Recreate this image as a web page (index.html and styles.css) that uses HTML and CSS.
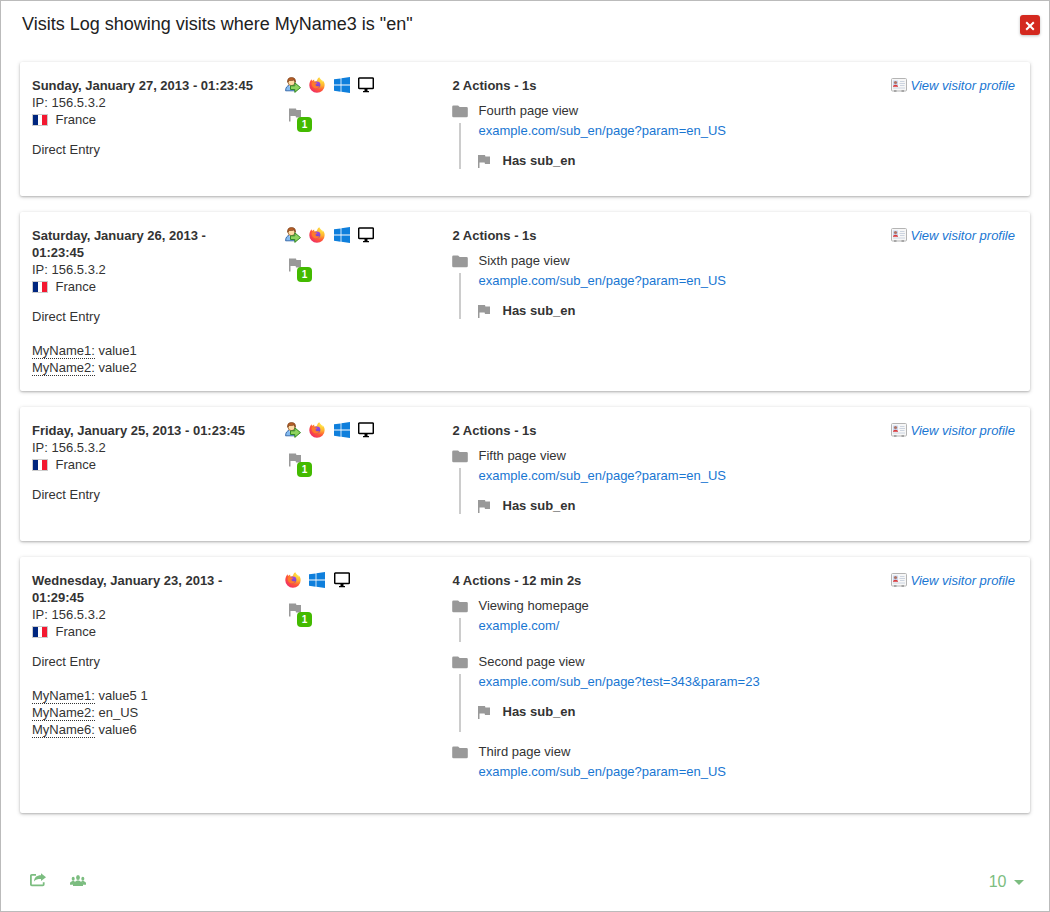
FILE: index.html
```html
<!DOCTYPE html>
<html lang="en">
<head>
<meta charset="utf-8">
<title>Visits Log</title>
<link rel="stylesheet" href="styles.css">
</head>
<body>
<svg class="sprite" aria-hidden="true">
  <defs>
    <radialGradient id="flame" cx=".85" cy=".1" r="1.050">
      <stop offset="0" stop-color="#fff04a"/><stop offset=".4" stop-color="#ffb52e"/><stop offset=".68" stop-color="#ff5a36"/><stop offset="1" stop-color="#ee2a6a"/>
    </radialGradient>
    <linearGradient id="globe" x1="0" y1="0" x2="0" y2="1">
      <stop offset="0" stop-color="#a04be0"/><stop offset="1" stop-color="#7040c8"/>
    </linearGradient>
  </defs>
  <symbol id="returning" viewBox="0 0 16 16">
    <path d="M.6 13.800c0-3.200 1.400-5.200 4-5.500h3c2 .2 3.200 1.600 3.400 5.500z" fill="#86bcf0" stroke="#2f62a5" stroke-width=".9"/>
    <path d="M3.800 8.300 6 11.600l2-3.300z" fill="#fff"/>
    <ellipse cx="6.500" cy="5" rx="3.500" ry="3.700" fill="#ffdba6" stroke="#8a4b15" stroke-width=".7"/>
    <path d="M2.600 5.300C2.300 1.800 3.800.600 6.500.600s4.400 1.200 3.900 4.700C10 4.300 9.500 3.500 9 2.900 7.500 3.700 5 3.500 4.100 3.400z" fill="#b8602a" stroke="#6b3510" stroke-width=".6"/>
    <path d="M5.500 8.800h4.300V5.800L15.500 10.600l-5.700 4.800v-2.900H5.500z" fill="#8fd45e" stroke="#28801a" stroke-width=".9"/>
  </symbol>
  <symbol id="firefox" viewBox="0 0 16 16">
    <path d="M15.400 6.200c-.4-1.500-1.500-2.600-2.200-3.100.4.700.6 1.300.7 1.900C12.800 2.700 11 2 10.300.3 8.600 1.400 8.100 2.800 8 3.800c-.8 0-1.500.3-2.100.6-.8-.5-.8-1.300-.7-2-1 .5-1.700 1.200-2.100 1.700-.4-.4-.4-1.200-.3-1.800C1.300 3.500.3 5.900.3 8.300a7.650 7.500 0 0 0 15.300.1c0-.8 0-1.500-.2-2.200z" fill="url(#flame)"/>
    <circle cx="8" cy="7.800" r="3.400" fill="url(#globe)"/>
    <path d="M2.900 5.200c1.300-.5 2.500-.3 3.300.4 1 .2 1.600.1 1.800.4.100.8-1 1-1.500 1.400-.3 1.300 1.800 2.500 4.200 1.600-.6 1.800-2.600 2.800-4.600 2.200C3.400 10.500 2 7.500 2.900 5.200z" fill="#ff7a2c"/>
  </symbol>
  <symbol id="windows" viewBox="0 0 16 16">
    <path d="M0 2.300 6.600 1.400V7.600H0zM7.400 1.300 16 .1V7.600H7.400zM0 8.400h6.600v6.300L0 13.800zM7.400 8.400H16v7.500l-8.600-1.200z" fill="#0f7fdc"/>
  </symbol>
  <symbol id="desktop" viewBox="0 0 16 16">
    <path d="M1.400 1h13.200q.7 0 .7.700v9q0 .7-.7.700H1.400q-.7 0-.7-.7v-9q0-.7.7-.7z" fill="none" stroke="#000" stroke-width="1.500"/>
    <path d="M6.500 12h3v2H11v1.300H5V14h1.500z" fill="#000"/>
  </symbol>
  <symbol id="flag" viewBox="0 0 14 14">
    <path d="M1 1h7l.4 1.500H13V10H8l-.4-1.600H2.500V14H1z" fill="#999"/>
  </symbol>
  <symbol id="folder" viewBox="0 0 16 13">
    <path d="M1.500.500h4.600L7.700 2h6.800q1.300 0 1.300 1.300v7.600q0 1.300-1.300 1.300h-13Q.2 12.200.2 10.900V1.800Q.2.500 1.500.500z" fill="#999"/>
  </symbol>
  <symbol id="profile" viewBox="0 0 16 14">
    <rect x=".5" y=".5" width="15" height="12.500" rx="1" fill="#f7f7f7" stroke="#b4b4b4"/>
    <path d="M2 2.500h5v6H2z" fill="#c8d8f2"/>
    <circle cx="4.500" cy="4.500" r="1.600" fill="#b07565"/>
    <path d="M2 8.800V8q2.500-2.600 5 0v.8z" fill="#dc3a3a"/>
    <path d="M9 3.500h4.500M8.500 5.500h5.500M9 7.500h4.500M2 10h12" stroke="#c6cfdd" stroke-width=".9"/>
    <path d="M3 13h2.500M10.500 13H13" stroke="#777" stroke-width="1"/>
  </symbol>
</svg>

<main class="dialog">
  <header class="dialog-head">
    <h1 class="title">Visits Log showing visits where MyName3 is "en"</h1>
    <button class="close" aria-label="Close"><svg width="10" height="10" viewBox="0 0 10 10"><path d="M1.200 1.200 8.800 8.800M8.800 1.200 1.200 8.800" stroke="#fff" stroke-width="2"/></svg></button>
  </header>

  <section class="card">
    <div class="visit">
      <strong class="date">Sunday, January 27, 2013 - 01:23:45</strong>
      <div>IP: 156.5.3.2</div>
      <div class="country"><span class="france"></span>France</div>
      <div class="referrer">Direct Entry</div>
    </div>
    <div class="tech">
      <div class="icons"><svg class="ic"><use href="#returning"/></svg><svg class="ic"><use href="#firefox"/></svg><svg class="ic win"><use href="#windows"/></svg><svg class="ic"><use href="#desktop"/></svg></div>
      <div class="goal"><svg class="goal-flag"><use href="#flag"/></svg><span class="badge">1</span></div>
    </div>
    <div class="actions">
      <strong class="summary">2 Actions - 1s</strong>
      <div class="page last"><div class="rail"><svg class="folder"><use href="#folder"/></svg><i class="line"></i></div>
        <div><div>Fourth page view</div><a class="url">example.com/sub_en/page?param=en_US</a><div class="event"><svg class="event-flag"><use href="#flag"/></svg>Has sub_en</div></div></div>
    </div>
    <a class="profile"><svg class="card-icon"><use href="#profile"/></svg>View visitor profile</a>
  </section>

  <section class="card">
    <div class="visit">
      <strong class="date">Saturday, January 26, 2013 - 01:23:45</strong>
      <div>IP: 156.5.3.2</div>
      <div class="country"><span class="france"></span>France</div>
      <div class="referrer">Direct Entry</div>
      <div class="vars"><div><span class="var">MyName1:</span> value1</div><div><span class="var">MyName2:</span> value2</div></div>
    </div>
    <div class="tech">
      <div class="icons"><svg class="ic"><use href="#returning"/></svg><svg class="ic"><use href="#firefox"/></svg><svg class="ic win"><use href="#windows"/></svg><svg class="ic"><use href="#desktop"/></svg></div>
      <div class="goal"><svg class="goal-flag"><use href="#flag"/></svg><span class="badge">1</span></div>
    </div>
    <div class="actions">
      <strong class="summary">2 Actions - 1s</strong>
      <div class="page last"><div class="rail"><svg class="folder"><use href="#folder"/></svg><i class="line"></i></div>
        <div><div>Sixth page view</div><a class="url">example.com/sub_en/page?param=en_US</a><div class="event"><svg class="event-flag"><use href="#flag"/></svg>Has sub_en</div></div></div>
    </div>
    <a class="profile"><svg class="card-icon"><use href="#profile"/></svg>View visitor profile</a>
  </section>

  <section class="card">
    <div class="visit">
      <strong class="date">Friday, January 25, 2013 - 01:23:45</strong>
      <div>IP: 156.5.3.2</div>
      <div class="country"><span class="france"></span>France</div>
      <div class="referrer">Direct Entry</div>
    </div>
    <div class="tech">
      <div class="icons"><svg class="ic"><use href="#returning"/></svg><svg class="ic"><use href="#firefox"/></svg><svg class="ic win"><use href="#windows"/></svg><svg class="ic"><use href="#desktop"/></svg></div>
      <div class="goal"><svg class="goal-flag"><use href="#flag"/></svg><span class="badge">1</span></div>
    </div>
    <div class="actions">
      <strong class="summary">2 Actions - 1s</strong>
      <div class="page last"><div class="rail"><svg class="folder"><use href="#folder"/></svg><i class="line"></i></div>
        <div><div>Fifth page view</div><a class="url">example.com/sub_en/page?param=en_US</a><div class="event"><svg class="event-flag"><use href="#flag"/></svg>Has sub_en</div></div></div>
    </div>
    <a class="profile"><svg class="card-icon"><use href="#profile"/></svg>View visitor profile</a>
  </section>

  <section class="card tall">
    <div class="visit">
      <strong class="date">Wednesday, January 23, 2013 - 01:29:45</strong>
      <div>IP: 156.5.3.2</div>
      <div class="country"><span class="france"></span>France</div>
      <div class="referrer">Direct Entry</div>
      <div class="vars"><div><span class="var">MyName1:</span> value5 1</div><div><span class="var">MyName2:</span> en_US</div><div><span class="var">MyName6:</span> value6</div></div>
    </div>
    <div class="tech">
      <div class="icons"><svg class="ic"><use href="#firefox"/></svg><svg class="ic"><use href="#windows"/></svg><svg class="ic win"><use href="#desktop"/></svg></div>
      <div class="goal"><svg class="goal-flag"><use href="#flag"/></svg><span class="badge">1</span></div>
    </div>
    <div class="actions">
      <strong class="summary">4 Actions - 12 min 2s</strong>
      <div class="page"><div class="rail"><svg class="folder"><use href="#folder"/></svg><i class="line"></i></div>
        <div><div>Viewing homepage</div><a class="url">example.com/</a></div></div>
      <div class="page with-event"><div class="rail"><svg class="folder"><use href="#folder"/></svg><i class="line"></i></div>
        <div><div>Second page view</div><a class="url">example.com/sub_en/page?test=343&amp;param=23</a><div class="event"><svg class="event-flag"><use href="#flag"/></svg>Has sub_en</div></div></div>
      <div class="page last"><div class="rail"><svg class="folder"><use href="#folder"/></svg></div>
        <div><div>Third page view</div><a class="url">example.com/sub_en/page?param=en_US</a></div></div>
    </div>
    <a class="profile"><svg class="card-icon"><use href="#profile"/></svg>View visitor profile</a>
  </section>

  <footer class="foot">
    <svg class="share" width="17" height="14" viewBox="0 0 17 14"><path d="M6 1.900H1.800Q.9 1.900.9 2.800v8.700q0 .9.900.9h11q.9 0 .9-.9V9.300" fill="none" stroke="#7cbd80" stroke-width="1.800"/><path d="M11 .3 16 4.200 11 8.100V5.900C7.500 5.900 5.500 6.300 4 8.500 4.300 4.500 6.500 2.300 11 2.300z" fill="#7cbd80"/></svg>
    <svg class="people" width="16" height="11" viewBox="0 0 16 11"><g fill="#7cbd80"><ellipse cx="8" cy="2.600" rx="1.900" ry="2.500"/><ellipse cx="3.200" cy="3.700" rx="1.500" ry="2"/><ellipse cx="12.800" cy="3.700" rx="1.500" ry="2"/><path d="M3 11V9.200Q3 7.300 5 6.800L7 5.500h2l2 1.300q2 .5 2 2.400V11zM0 9.800V8Q0 7 1.500 6.500l1.500-.8 2 .7Q3 7.300 2.800 9.800zM16 9.800V8q0-1-1.500-1.500L13 5.700l-2 .7q2 .9 2.200 3.400z"/></g></svg>
    <div class="limit">10<span class="caret"></span></div>
  </footer>
</main>
</body>
</html>
```
FILE: styles.css
```css
* { box-sizing: border-box; }
body { margin: 0; background: #fff; color: #333; font: 13px/17px "Liberation Sans", Arial, sans-serif; }
svg { display: block; flex: none; }
.sprite { position: absolute; width: 0; height: 0; }
.dialog { height: 912px; border: 1px solid #bbb; padding: 0 19px; display: flex; flex-direction: column; }
.dialog-head { height: 61px; flex: none; display: flex; justify-content: space-between; align-items: flex-start; padding: 12px 0 0 2px; }
.title { margin: 0; font-size: 18px; line-height: 23px; font-weight: 400; color: #212121; }
.close { width: 20px; height: 20px; margin: 2px -10px 0 0; padding: 1px 0 0; border: 0; border-radius: 3px; background: #d4291f; display: flex; align-items: center; justify-content: center; box-shadow: 0 1px 3px rgba(0,0,0,.25); }
.card { flex: none; min-height: 134px; margin: 0 -1px 16px 0; width: 1010px; padding: 15px 15px 15px 12px; border-radius: 2px; display: grid; grid-template-columns: 253px 167.5px 1fr auto; align-items: start; box-shadow: 0 1px 4px rgba(0,0,0,.18), 0 1px 2px rgba(0,0,0,.18); }
.card.tall { min-height: 256px; }
.visit { width: 225px; }
.date { display: block; }
.country { display: flex; align-items: center; gap: 7.500px; }
.france { width: 16px; height: 12px; border: 1px solid #ccc; background: linear-gradient(90deg, #00267f 0 35%, #fff 35% 65%, #f31830 65%); }
.referrer { margin-top: 13px; }
.vars { margin-top: 17px; }
.var { border-bottom: 1px dotted #333; }
.icons { display: flex; gap: 8px; }
.ic { width: 16px; height: 16px; }
.win { margin-left: 1px; }
.goal { display: flex; margin: 14px 0 0 3px; }
.goal-flag { width: 14px; height: 15px; }
.badge { width: 15px; height: 15px; margin: 10px 0 0 -5px; border-radius: 4px; background: #43ba00; color: #fff; font-size: 10px; font-weight: 700; line-height: 15px; text-align: center; }
.summary { display: block; margin-bottom: 7px; }
.page { display: grid; grid-template-columns: 26px 1fr; line-height: 20px; padding-bottom: 16px; }
.page.with-event { padding-bottom: 20px; }
.page.last { padding-bottom: 0; }
.rail { display: flex; flex-direction: column; width: 16px; align-items: center; padding-top: 4px; margin: 0 0 -6px -.6px; }
.with-event .rail { margin-bottom: -10px; }
.last .rail { margin-bottom: 2px; }
.folder { width: 16px; height: 13px; }
.line { flex: 1; width: 2px; margin-top: 5px; background: #ccc; }
.url, .profile { color: #1976d2; }
.url { display: block; }
.event { display: flex; align-items: center; margin-top: 10px; font-weight: 700; }
.event-flag { width: 14px; height: 14px; margin: 0 11.500px 0 -1.500px; }
.profile { display: flex; gap: 3.500px; font-style: italic; }
.card-icon { width: 16px; height: 14px; margin-top: 1px; }
.foot { display: flex; align-items: flex-start; padding: 44px 6px 0 10px; }
.people { margin: 2px 0 0 23px; }
.limit { margin-left: auto; display: flex; align-items: center; gap: 7.500px; font-size: 16px; line-height: 18px; color: #7cbd80; }
.caret { border: 5px solid transparent; border-top-color: #7cbd80; border-bottom: 0; margin-top: 1px; }
```
